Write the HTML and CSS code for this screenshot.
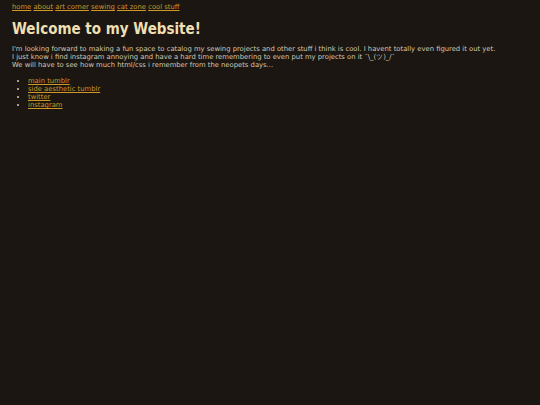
FILE: index.html
```html
<!DOCTYPE html>
<html>
<head>
<meta charset="utf-8">
<link rel="stylesheet" href="styles.css">
</head>
<body>
<nav class="nav"><a href="#">home</a> <a href="#">about</a> <a href="#">art corner</a> <a href="#">sewing</a> <a href="#">cat zone</a> <a href="#">cool stuff</a></nav>
<h1 class="title">Welcome to my Website!</h1>
<p class="intro">I'm looking forward to making a fun space to catalog my sewing projects and other stuff i think is cool. I havent totally even figured it out yet.<br>I just know i find instagram annoying and have a hard time remembering to even put my projects on it ¯\_(ツ)_/¯<br>We will have to see how much html/css i remember from the neopets days...</p>
<ul class="links">
<li><a href="#">main tumblr</a></li>
<li><a href="#">side aesthetic tumblr</a></li>
<li><a href="#">twitter</a></li>
<li><a href="#">instagram</a></li>
</ul>
</body>
</html>
```

FILE: styles.css
```css
html, body {
  background: #1b1611;
}
body {
  margin: 0;
  padding: 3px 12px;
  font-family: "DejaVu Sans", Verdana, sans-serif;
  font-size: 6.8px;
  line-height: 8px;
  color: #d4c8b2;
}
a {
  color: #cf9628;
  text-decoration: underline;
}
.nav {
  margin: 0;
}
.title {
  font-family: "DejaVu Sans Condensed", "DejaVu Sans", sans-serif;
  font-stretch: condensed;
  font-size: 15px;
  line-height: 18px;
  font-weight: bold;
  color: #efdfb2;
  margin: 9px 0 7px;
}
.intro {
  margin: 0;
}
.links {
  margin: 8px 0 0;
  padding-left: 16px;
}
```
